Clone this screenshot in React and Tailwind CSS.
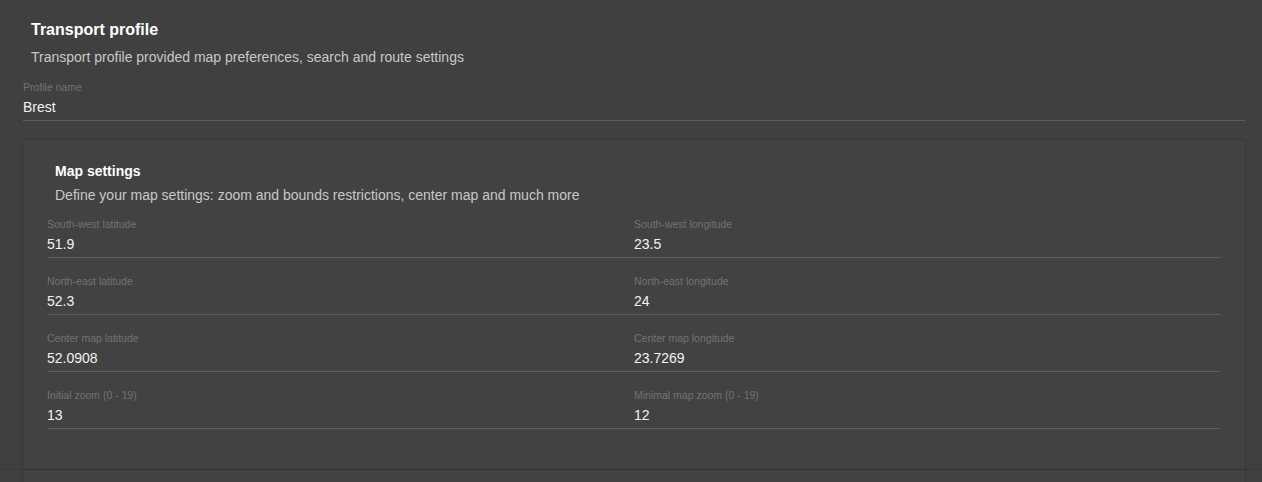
import React from 'react';

const fields = [
    { label: 'South-west latitude', value: '51.9' },
    { label: 'South-west longitude', value: '23.5' },
    { label: 'North-east latitude', value: '52.3' },
    { label: 'North-east longitude', value: '24' },
    { label: 'Center map latitude', value: '52.0908' },
    { label: 'Center map longitude', value: '23.7269' },
    { label: 'Initial zoom (0 - 19)', value: '13' },
    { label: 'Minimal map zoom (0 - 19)', value: '12' },
];

function Field({ label, value }) {
    return (
        <div className="flex flex-col">
            <label className="text-[10.5px] leading-[14px] text-[#727272]">{label}</label>
            <div className="mt-[3px] pb-[3px] text-[14px] leading-[20px] text-[#f2f2f2] border-b border-[#5c5c5c]">
                {value}
            </div>
        </div>
    );
}

export default function App() {
    return (
        <div
            className="h-[482px] overflow-hidden bg-[#404040] pl-[23px] pr-[17px] pt-[18px]"
            style={{ fontFamily: '"Liberation Sans", Arial, sans-serif' }}
        >
            {/* header */}
            <div className="px-2">
                <h1 className="text-[16px] leading-[24px] font-bold text-white">Transport profile</h1>
                <p className="mt-[5px] text-[14px] leading-[20px] text-[#c8c8c8]">
                    Transport profile provided map preferences, search and route settings
                </p>
            </div>

            <div className="mt-[13px] w-full">
                <Field label="Profile name" value="Brest" />
            </div>

            {/* map settings card */}
            <div className="mt-[19px] h-[329px] bg-[#424242] shadow-[0_0_2px_rgba(0,0,0,0.35)] pt-[21px] px-6">
                <div className="px-2">
                    <h2 className="text-[14px] leading-[20px] font-bold text-white">Map settings</h2>
                    <p className="mt-[4px] text-[14px] leading-[20px] text-[#c8c8c8]">
                        Define your map settings: zoom and bounds restrictions, center map and much more
                    </p>
                </div>
                <div className="mt-[12px] grid grid-cols-2 gap-y-4">
                    {fields.map((f) => (
                        <Field key={f.label} label={f.label} value={f.value} />
                    ))}
                </div>
            </div>

            <div className="-ml-[23px] -mr-[17px] border-t border-[#3a3a3a]" />

            {/* next card, cut off */}
            <div className="h-[20px] bg-[#424242] shadow-[0_0_2px_rgba(0,0,0,0.35)]" />
        </div>
    );
}
